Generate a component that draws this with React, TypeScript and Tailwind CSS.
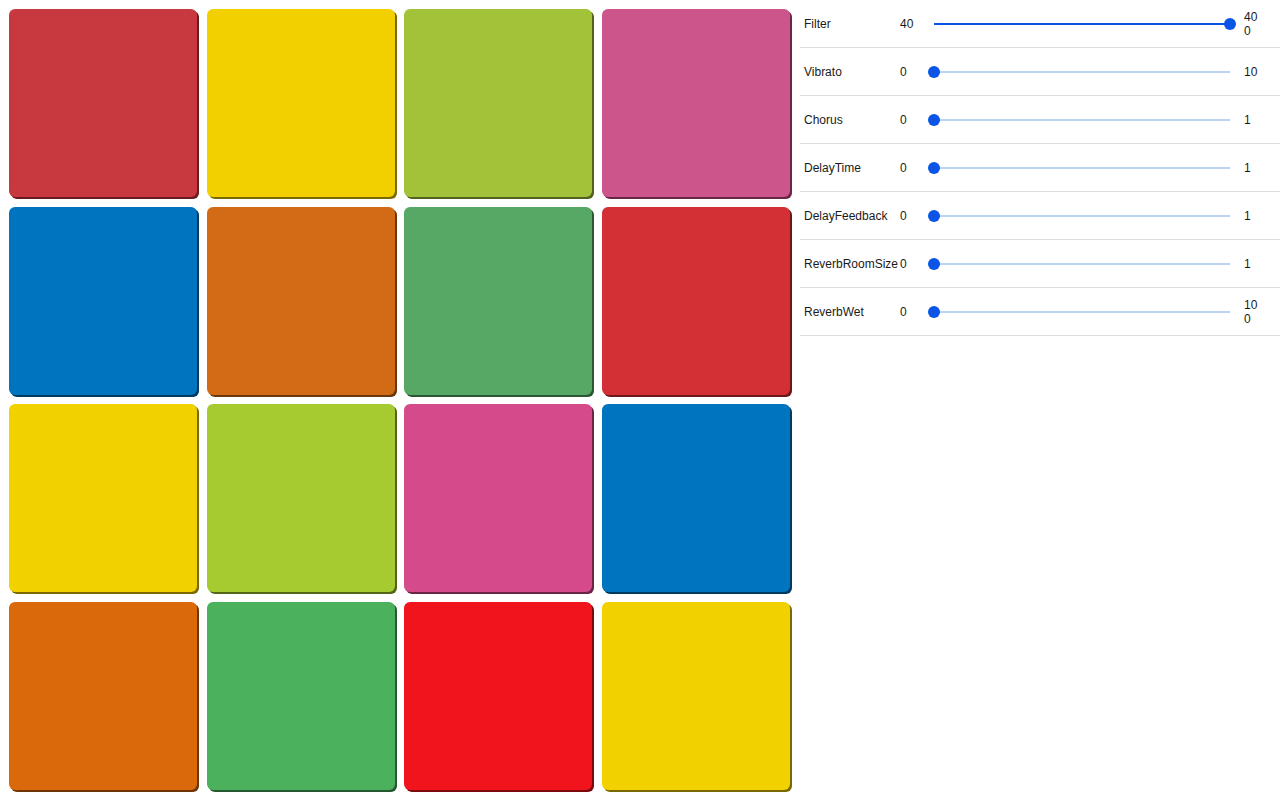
import React from 'react';

interface Pad {
  id: number;
  className: string;
}

// each pad: fill colour plus a hard shadow in the same hue at about half brightness
const pads: Pad[] = [
  { id: 1, className: 'bg-[#c8393f] shadow-[2px_2px_0_#6a1b20]' },
  { id: 2, className: 'bg-[#f2d000] shadow-[2px_2px_0_#7a6900]' },
  { id: 3, className: 'bg-[#a2c23a] shadow-[2px_2px_0_#51621d]' },
  { id: 4, className: 'bg-[#cc558c] shadow-[2px_2px_0_#6a2647]' },
  { id: 5, className: 'bg-[#0074be] shadow-[2px_2px_0_#003a60]' },
  { id: 6, className: 'bg-[#d26b15] shadow-[2px_2px_0_#6a360b]' },
  { id: 7, className: 'bg-[#58a865] shadow-[2px_2px_0_#2c5533]' },
  { id: 8, className: 'bg-[#d33035] shadow-[2px_2px_0_#6a181b]' },
  { id: 9, className: 'bg-[#f2d100] shadow-[2px_2px_0_#7a6900]' },
  { id: 10, className: 'bg-[#a6cb30] shadow-[2px_2px_0_#536618]' },
  { id: 11, className: 'bg-[#d44a8a] shadow-[2px_2px_0_#6a2545]' },
  { id: 12, className: 'bg-[#0074be] shadow-[2px_2px_0_#003a60]' },
  { id: 13, className: 'bg-[#da690c] shadow-[2px_2px_0_#6e3506]' },
  { id: 14, className: 'bg-[#4bb15d] shadow-[2px_2px_0_#26592f]' },
  { id: 15, className: 'bg-[#f1141c] shadow-[2px_2px_0_#7a0a0e]' },
  { id: 16, className: 'bg-[#f2d100] shadow-[2px_2px_0_#7a6900]' },
];

interface Param {
  name: string;
  value: number;
  min: number;
  max: number;
}

const params: Param[] = [
  { name: 'Filter', value: 400, min: 40, max: 400 },
  { name: 'Vibrato', value: 0, min: 0, max: 10 },
  { name: 'Chorus', value: 0, min: 0, max: 1 },
  { name: 'DelayTime', value: 0, min: 0, max: 1 },
  { name: 'DelayFeedback', value: 0, min: 0, max: 1 },
  { name: 'ReverbRoomSize', value: 0, min: 0, max: 1 },
  { name: 'ReverbWet', value: 0, min: 0, max: 100 },
];

function Slider({ param }: { param: Param }) {
  const pct = ((param.value - param.min) / (param.max - param.min)) * 100;
  return (
    <div className="relative h-[12px] w-[296px] shrink-0">
      <div className="absolute left-0 right-0 top-[5px] h-[2px] bg-[#bcd3f5]" />
      <div
        className="absolute left-0 top-[5px] h-[2px] bg-[#0a55e6]"
        style={{ width: `${pct}%` }}
      />
      <div
        className="absolute top-0 h-[12px] w-[12px] -translate-x-1/2 rounded-full bg-[#0a55e6]"
        style={{ left: `${pct}%` }}
      />
    </div>
  );
}

export default function App() {
  return (
    <div className="flex h-[800px] w-[1280px] bg-white font-['Liberation_Sans',Arial,sans-serif]">
      <div className="w-[800px] shrink-0 pl-[9px] pt-[9px]">
        <div className="grid grid-cols-[repeat(4,188px)] grid-rows-[repeat(4,188px)] gap-[9.67px]">
          {pads.map((pad) => (
            <div key={pad.id} className={`rounded-[6px] ${pad.className}`} />
          ))}
        </div>
      </div>

      <div className="flex-1">
        {params.map((p) => (
          <div
            key={p.name}
            className="flex h-[48px] items-center border-b border-[#dddddd] pl-[4px] text-[12px] text-[#1a1a1a]"
          >
            <span className="w-[96px] shrink-0">{p.name}</span>
            <span className="w-[28px] shrink-0">{p.min}</span>
            <div className="ml-[6px]">
              <Slider param={p} />
            </div>
            <span className="ml-[14px] w-[16px] break-all leading-[14px]">{p.max}</span>
          </div>
        ))}
      </div>
    </div>
  );
}
